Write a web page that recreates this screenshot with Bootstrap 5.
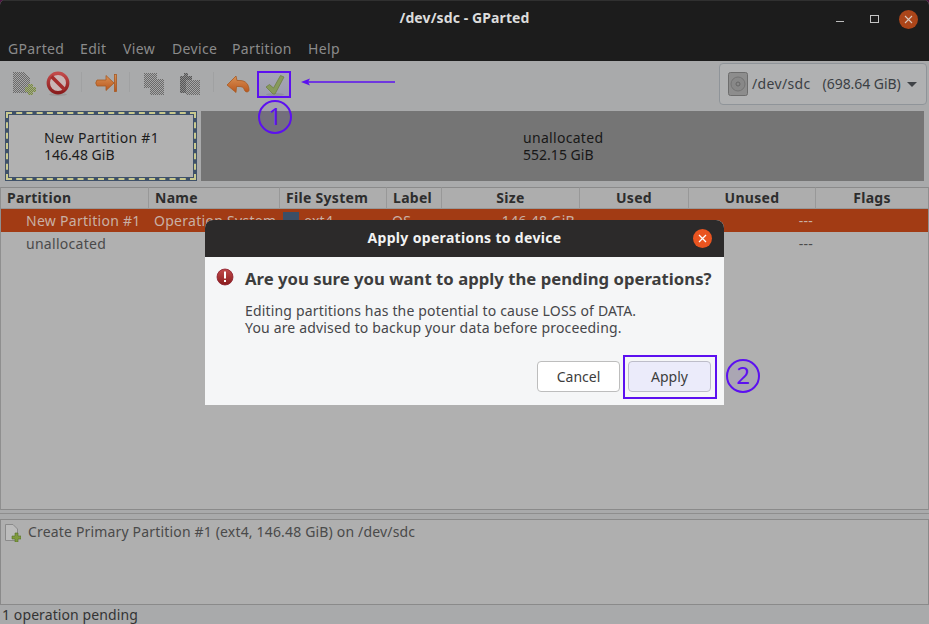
<!DOCTYPE html>
<html lang="en">
<head>
<meta charset="utf-8">
<title>/dev/sdc - GParted</title>
<link href="https://cdn.jsdelivr.net/npm/bootstrap@5.3.0/dist/css/bootstrap.min.css" rel="stylesheet">
<style>
html,body{width:929px;height:624px;overflow:hidden;margin:0;background:#4a1440;}
body{font-family:"Noto Sans","Open Sans",sans-serif;font-size:14px;line-height:1.2;color:#2e2e2e;position:relative;}
.app-window{height:624px;background:#adadad;border-radius:5px 5px 0 0;overflow:hidden;}
.title-bar{height:37px;background:#1c1c1c;box-shadow:inset 0 1px #303030;color:#dcdcdc;font-weight:700;font-size:14px;letter-spacing:.1px;}
.win-min{width:8px;height:1px;background:#bcbcbc;position:absolute;left:836px;top:21px;}
.win-max{width:9px;height:8px;border:1px solid #c4c4c4;position:absolute;left:870px;top:15px;}
.win-close{width:19px;height:19px;border-radius:50%;background:#ab4519;position:absolute;left:899px;top:10px;}
.menu-strip{height:24px;background:#1c1c1c;color:#8b8b8b;font-size:14px;padding-left:8px;letter-spacing:.35px;}
.mi-a{width:72px}.mi-b{width:43px}.mi-c{width:49px}.mi-d{width:60px}.mi-e{width:76px}
.tool-strip{height:50px;background:#a9aaab;}
.tool-icon{position:absolute;}
.tool-sep{position:absolute;top:11px;width:1px;height:20px;background:#a0a1a2;}
.tool-area{position:relative;width:500px;height:50px;}
.i1{left:12px;top:10px}.i2{left:46px;top:10px}.s1{left:81px}.i3{left:95px;top:13px}.s2{left:129px}
.i4{left:143px;top:11px}.i5{left:179px;top:11px}.s3{left:213px}.i6{left:226px;top:14px}
.dev-select{width:208px;height:42px;margin:2px 2px 0 0;background:#b0b1b2;border:1px solid #8f9499;border-radius:4px;color:#3b3f44;font-size:14px;padding:0 8px;}
.dev-gap{margin-left:12px;letter-spacing:-.05px;}
.dev-name{margin-left:4px;letter-spacing:.35px;}
.caret-tri{width:0;height:0;border-left:5px solid transparent;border-right:5px solid transparent;border-top:5px solid #3f4246;margin-left:auto;margin-right:1px;}
.graph-strip{height:70px;padding:0 5px;gap:4px;background:#a9aaab;line-height:17px;letter-spacing:.3px;}
.part-box{width:192px;background:#b1b1b1;border:4px solid #3f5169;position:relative;color:#1c1c1c;padding:0 0 0 35px;}
.part-box::before{content:"";position:absolute;inset:-3px;border:2px dashed #c9c98f;}
.free-box{flex:1;background:#757575;color:#181818;padding:0 0 0 322px;}
.size-line{letter-spacing:.02px;}
.spacer-line{height:6px;background:#a9aaab;}
.part-table{table-layout:fixed;width:928px;margin:0;--bs-table-bg:transparent;--bs-table-color:#4a4a4a;border-collapse:separate;border-spacing:0;font-size:14px;letter-spacing:.28px;}
.part-table th{height:22px;padding:0 6px;background:#adadad;border:0;border-top:1px solid #8a8a8a;border-bottom:1px solid #979797;border-right:1px solid #989898;color:#2d2d2d;font-weight:700;line-height:1;vertical-align:middle;letter-spacing:.3px;}
.part-table td{height:23px;padding:0 5px;border:0;vertical-align:middle;line-height:1;white-space:nowrap;overflow:hidden;}
.part-table tr.sel td{background:#a23b14;color:#c9b0a5;}
.c1{width:148px}.c2{width:131px}.c3{width:107px}.c4{width:55px}.c5{width:138px}.c6{width:109px}.c7{width:127px}.c8{width:113px}
.ind{padding-left:25px!important;}
.dash-cell{padding-right:3px!important;}
.sw{display:inline-block;width:16px;height:16px;background:#3b4f67;vertical-align:top;margin:-2px 5px 0 -2px;}
.tbl-zone{height:323px;background:#b0b0b0;border-bottom:1px solid #8a8a8a;border-left:1px solid #8f8f8f;border-right:1px solid #8f8f8f;overflow:hidden;}
.pane-grip{height:9px;background:#a9aaab;position:relative;}
.pane-grip::after{content:"";position:absolute;left:0;right:0;top:3px;height:1px;background:#8e8e8e;}
.ops-zone{height:86px;background:#afafaf;border:1px solid #8a8a8a;padding:4px 4px;color:#4a4a4a;gap:7px;letter-spacing:.17px;}
.stat-line{height:19px;background:#a9aaab;color:#343434;padding:2px 0 0 2px;letter-spacing:.1px;}
.dlg{position:absolute;left:205px;top:220px;width:519px;height:185px;background:#f5f6f7;border-radius:8px 8px 0 0;overflow:hidden;}
.dlg-head{height:37px;background:#2c2a2a;color:#f2f2f2;font-weight:700;font-size:14px;letter-spacing:.33px;}
.dlg-x{position:absolute;right:12px;top:9px;width:19px;height:19px;border-radius:50%;background:#e95420;}
.dlg-body{padding:0 5px 0 11px;height:148px;color:#3d3d3d;}
.dlg-alert{margin:11px 11px 0 0;}
.dlg-title{font-size:16.7px;font-weight:700;line-height:22px;margin:11px 0 0 0;color:#3d3d3d;white-space:nowrap;letter-spacing:.02px;}
.dlg-msg{font-size:14px;line-height:17px;margin:12px 0 0 29px;color:#46464a;letter-spacing:.17px;}
.dlg-actions{position:absolute;right:13px;bottom:13px;gap:8px;}
.gbtn{width:83px;height:31px;font-size:14px;line-height:1;padding:0;border-radius:4px;color:#3d3d3d;--bs-btn-color:#3d3d3d;}
.gbtn-cancel{background:#fff;border:1px solid #bdbdbd;box-shadow:inset 0 0 0 1px #fff;}
.gbtn-apply{background:#ebebfa;border:1px solid #bdbdc9;}
.hl-box{position:absolute;border:2px solid #5c10f0;}
.hl-check{left:257px;top:71px;width:34px;height:27px;background:linear-gradient(#a6a6b4,#9c9cae);}
.hl-apply{left:623px;top:355px;width:94px;height:44px;}
.num-circle{position:absolute;width:34px;height:34px;border:2px solid #5c10f0;border-radius:50%;color:#5c10f0;font-size:24px;line-height:28px;text-align:center;background:rgba(90,15,232,.06);}
.n1{left:258px;top:100px;}
.n2{left:726px;top:359px;}
.arrow-ann{position:absolute;left:300px;top:75px;}
.check-over{position:absolute;left:265px;top:74px;}
</style>
</head>
<body>
<svg width="0" height="0" class="position-absolute">
<defs>
<pattern id="chk" width="2" height="2" patternUnits="userSpaceOnUse"><rect width="2" height="2" fill="#a8a8a8"/><rect width="1" height="1" fill="#6a6a6a"/><rect x="1" y="1" width="1" height="1" fill="#6a6a6a"/></pattern>
<pattern id="chk2" width="2" height="2" patternUnits="userSpaceOnUse"><rect width="2" height="2" fill="#8c8c8c"/><rect width="1" height="1" fill="#565656"/><rect x="1" y="1" width="1" height="1" fill="#565656"/></pattern>
<pattern id="chkg" width="2" height="2" patternUnits="userSpaceOnUse"><rect width="2" height="2" fill="#a3ad7e"/><rect width="1" height="1" fill="#76834e"/><rect x="1" y="1" width="1" height="1" fill="#76834e"/></pattern>
<linearGradient id="org" x1="0" y1="0" x2="0" y2="1"><stop offset="0" stop-color="#d99155"/><stop offset="1" stop-color="#b9561c"/></linearGradient>
<linearGradient id="red" x1="0" y1="0" x2="0" y2="1"><stop offset="0" stop-color="#c24a4a"/><stop offset="1" stop-color="#8a1c1c"/></linearGradient>
</defs>
</svg>
<div class="app-window d-flex flex-column">
  <div class="title-bar d-flex align-items-center justify-content-center position-relative">
    <span>/dev/sdc - GParted</span>
    <span class="win-min"></span><span class="win-max"></span>
    <span class="win-close d-flex align-items-center justify-content-center"><svg width="9" height="9" viewBox="0 0 9 9"><path d="M1 1l7 7M8 1l-7 7" stroke="#d9c7bd" stroke-width="1.1" fill="none"/></svg></span>
  </div>
  <div class="menu-strip d-flex align-items-center">
    <span class="mi-a">GParted</span><span class="mi-b">Edit</span><span class="mi-c">View</span><span class="mi-d">Device</span><span class="mi-e">Partition</span><span>Help</span>
  </div>
  <div class="tool-strip d-flex justify-content-between">
    <div class="tool-area">
      <svg class="tool-icon i1" width="24" height="24" viewBox="0 0 24 24"><path d="M1 1H12L18 7V22H1Z" fill="url(#chk)"/><path d="M16 13h5v3h3v5h-3v3h-5v-3h-3v-5h3z" fill="url(#chkg)"/></svg>
      <svg class="tool-icon i2" width="24" height="26" viewBox="0 0 24 26"><ellipse cx="12" cy="23.500" rx="9" ry="1.500" fill="#9a9a9a"/><circle cx="12" cy="12" r="9.700" fill="#c9b5b5" stroke="url(#red)" stroke-width="3.400"/><path d="M5.500 5.500L18.500 18.500" stroke="#a42c2c" stroke-width="3.600"/></svg>
      <span class="tool-sep s1"></span>
      <svg class="tool-icon i3" width="22" height="18" viewBox="0 0 22 18"><path d="M2 6H11V1.500L19 9L11 16.500V12H2Q-.5 9 2 6Z" fill="url(#org)" stroke="#a75a23" stroke-width=".8"/><rect x="19.500" y=".5" width="2" height="17" fill="url(#org)" stroke="#a75a23" stroke-width=".8"/></svg>
      <span class="tool-sep s2"></span>
      <svg class="tool-icon i4" width="22" height="24" viewBox="0 0 22 24"><rect x="1" y="1" width="13" height="15" fill="url(#chk)"/><rect x="7" y="7" width="14" height="16" fill="#a9aaab"/><rect x="7" y="7" width="14" height="16" fill="url(#chk)"/></svg>
      <svg class="tool-icon i5" width="22" height="24" viewBox="0 0 22 24"><path d="M1 4h4V1h4v3h4v17H1z" fill="url(#chk2)"/><rect x="7" y="8" width="14" height="15" fill="#a9aaab"/><rect x="7" y="8" width="14" height="15" fill="url(#chk)"/></svg>
      <span class="tool-sep s3"></span>
      <svg class="tool-icon i6" width="24" height="19" viewBox="0 0 24 19"><path d="M1 10L10 1L11 5.500H14C20 5.500 23 10 23 15C23 17.500 19 17.500 18.500 15C18 12.500 16 11.500 13 11.500H10.500L10 17.500Z" fill="url(#org)" stroke="#a75a23" stroke-width=".8"/></svg>
    </div>
    <div class="dev-select d-flex align-items-center">
      <svg width="20" height="24" viewBox="0 0 20 24"><rect x=".5" y=".5" width="19" height="23" rx="2" fill="#8d8d8d" stroke="#6d6d6d"/><circle cx="10" cy="12" r="7" fill="#888" stroke="#747474"/><circle cx="10" cy="12" r="2" fill="none" stroke="#666"/></svg>
      <span class="dev-name">/dev/sdc</span><span class="dev-gap">(698.64 GiB)</span>
      <span class="caret-tri"></span>
    </div>
  </div>
  <div class="graph-strip d-flex">
    <div class="part-box d-flex flex-column justify-content-center"><span>New Partition #1</span><span class="size-line">146.48 GiB</span></div>
    <div class="free-box d-flex flex-column justify-content-center"><span>unallocated</span><span class="size-line">552.15 GiB</span></div>
  </div>
  <div class="spacer-line"></div>
  <div class="tbl-zone">
    <table class="table part-table">
      <colgroup><col class="c1"><col class="c2"><col class="c3"><col class="c4"><col class="c5"><col class="c6"><col class="c7"><col class="c8"></colgroup>
      <thead><tr><th>Partition</th><th>Name</th><th>File System</th><th>Label</th><th class="text-center">Size</th><th class="text-center">Used</th><th class="text-center">Unused</th><th class="text-center">Flags</th></tr></thead>
      <tbody>
        <tr class="sel"><td class="ind">New Partition #1</td><td>Operation System</td><td><span class="sw"></span>ext4</td><td>OS</td><td class="text-end">146.48 GiB</td><td></td><td class="text-end dash-cell">---</td><td></td></tr>
        <tr><td class="ind">unallocated</td><td></td><td></td><td></td><td></td><td></td><td class="text-end dash-cell">---</td><td></td></tr>
      </tbody>
    </table>
  </div>
  <div class="pane-grip"></div>
  <div class="ops-zone d-flex align-items-start">
    <svg width="16" height="18" viewBox="0 0 16 18"><path d="M.5.5H8L12.500 5V16.500H.5Z" fill="#bcbcbc" stroke="#8a8a8a"/><path d="M10 9h3v3h3v3h-3v3h-3v-3H7v-3h3z" fill="#7f9a3e" stroke="#55702a" stroke-width=".6"/></svg>
    <span>Create Primary Partition #1 (ext4, 146.48 GiB) on /dev/sdc</span>
  </div>
  <div class="stat-line d-flex align-items-center">1 operation pending</div>
</div>
<div class="dlg">
  <div class="dlg-head d-flex align-items-center justify-content-center position-relative">
    <span>Apply operations to device</span>
    <span class="dlg-x d-flex align-items-center justify-content-center"><svg width="9" height="9" viewBox="0 0 9 9"><path d="M1 1l7 7M8 1l-7 7" stroke="#fff" stroke-width="1.300" fill="none"/></svg></span>
  </div>
  <div class="dlg-body">
    <div class="d-flex align-items-start">
      <svg class="dlg-alert flex-shrink-0" width="18" height="18" viewBox="0 0 18 18"><circle cx="9" cy="9" r="8" fill="url(#red)" stroke="#8a1c2c" stroke-width=".8"/><rect x="8" y="3.500" width="2" height="7" fill="#fff"/><rect x="8" y="12" width="2" height="2" fill="#fff"/></svg>
      <p class="dlg-title">Are you sure you want to apply the pending operations?</p>
    </div>
    <p class="dlg-msg">Editing partitions has the potential to cause LOSS of DATA.<br>You are advised to backup your data before proceeding.</p>
    <div class="dlg-actions d-flex">
      <button type="button" class="btn gbtn gbtn-cancel">Cancel</button>
      <button type="button" class="btn gbtn gbtn-apply">Apply</button>
    </div>
  </div>
</div>
<span class="hl-box hl-check"></span>
<svg class="check-over" width="20" height="22" viewBox="0 0 20 22"><ellipse cx="10" cy="20.500" rx="9" ry="1.500" fill="#8f8fa0"/><path d="M1 13L4.500 10.500L8.500 14L15.500 1.500L19 3L10 20H8Z" fill="#879a5c" stroke="#6f7f44" stroke-width=".8"/></svg>
<span class="hl-box hl-apply"></span>
<span class="num-circle n1">1</span>
<span class="num-circle n2">2</span>
<svg class="arrow-ann" width="96" height="14" viewBox="0 0 96 14"><path d="M95 7H6" stroke="#5c10f0" stroke-width="1.500"/><path d="M1 7L10 3.500L8 7L10 10.500Z" fill="#5c10f0"/></svg>
</body>
</html>
